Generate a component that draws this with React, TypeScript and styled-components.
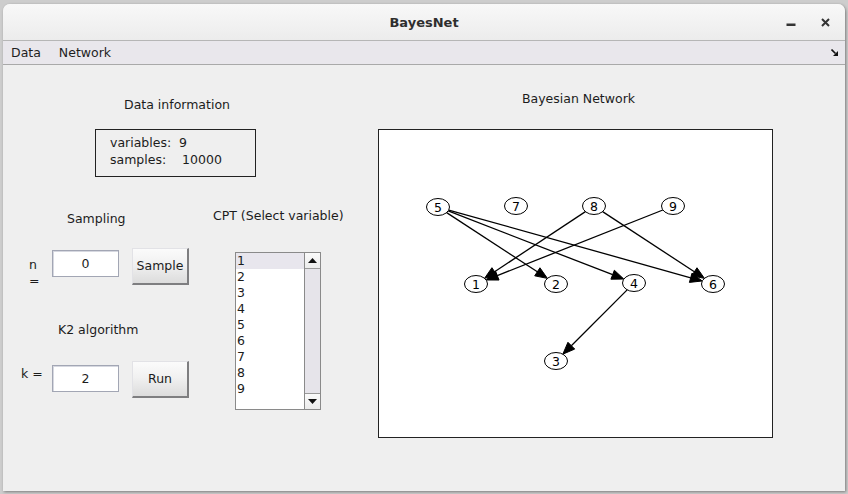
import React from "react";
import styled, { createGlobalStyle } from "styled-components";

const Global = createGlobalStyle`
  html, body { margin: 0; padding: 0; }
  body {
    background: #cdcdcd;
    font-family: "DejaVu Sans", "Liberation Sans", sans-serif;
    width: 848px;
    height: 494px;
    overflow: hidden;
  }
`;

const Window = styled.div`
  margin: 4px 0 0 3px;
  width: 842px;
  height: 487px;
  border-radius: 7px 7px 0 0;
  background: #efefef;
  box-shadow: 1px 1px 3px rgba(0, 0, 0, 0.4);
  overflow: hidden;
  display: flex;
  flex-direction: column;
`;

const TitleBar = styled.div`
  height: 36px;
  flex: none;
  background: linear-gradient(#f8f8f8, #ececec);
  border-bottom: 1px solid #b6b6b6;
  display: grid;
  grid-template-columns: 1fr auto 1fr;
  align-items: center;
`;

const Title = styled.div`
  grid-column: 2;
  font-size: 13px;
  font-weight: bold;
  color: #2e2e2e;
`;

const Controls = styled.div`
  grid-column: 3;
  justify-self: end;
  display: flex;
  align-items: center;
  gap: 25px;
  padding-right: 15px;
`;

const MenuBar = styled.div`
  height: 23px;
  flex: none;
  background: #e9e7ec;
  border-bottom: 1px solid #a9a9a9;
  display: flex;
  align-items: center;
  padding: 0 7px 0 8px;
  gap: 18px;
`;

const MenuItem = styled.span`
  font-size: 12.5px;
  color: #1e1e1e;
`;

const ResizeIcon = styled.svg`
  margin-left: auto;
`;

const Content = styled.div`
  flex: 1;
  display: flex;
  color: #1c1c1c;
  font-size: 12.5px;
`;

const LeftPanel = styled.div`
  width: 375px;
  flex: none;
  display: flex;
  flex-direction: column;
`;

const Heading = styled.div<{ $top?: number; $left?: number; $width?: number }>`
  margin-top: ${(p) => p.$top ?? 0}px;
  padding-left: ${(p) => p.$left ?? 0}px;
  ${(p) => (p.$width ? `width: ${p.$width}px; text-align: center;` : "")}
  line-height: 15px;
  white-space: nowrap;
`;

const InfoBox = styled.div`
  margin: 17px 0 0 92px;
  width: 161px;
  height: 48px;
  box-sizing: border-box;
  border: 1px solid #222;
  padding: 4px 0 0 14px;
  line-height: 17px;
  white-space: pre;
`;

const LowerRow = styled.div`
  display: flex;
  align-items: flex-start;
  margin: 31px 0 0 18px;
`;

const ControlsColumn = styled.div`
  width: 168px;
  display: flex;
  flex-direction: column;
`;

const FormRow = styled.div<{ $top: number }>`
  margin-top: ${(p) => p.$top}px;
  display: grid;
  grid-template-columns: 31px 80px 57px;
  align-items: start;
`;

const FieldLabel = styled.div<{ $top: number; $left: number }>`
  margin-top: ${(p) => p.$top}px;
  padding-left: ${(p) => p.$left}px;
  line-height: 16px;
  white-space: nowrap;
`;

const Field = styled.div<{ $top: number }>`
  margin-top: ${(p) => p.$top}px;
  width: 67px;
  height: 27px;
  box-sizing: border-box;
  background: #fff;
  border: 1px solid #a2a6b4;
  box-shadow: inset 1px 1px 0 #d6d8e0;
  display: flex;
  align-items: center;
  justify-content: center;
  padding-bottom: 1px;
`;

const Button = styled.div`
  width: 57px;
  height: 37px;
  box-sizing: border-box;
  border-style: solid;
  border-width: 1px 2px 2px 1px;
  border-color: #e2e2e6 #7e7e80 #7e7e80 #e2e2e6;
  background: linear-gradient(#fbfbfb, #f1f1f1 45%, #dcdcdc);
  display: flex;
  align-items: center;
  justify-content: center;
  padding-bottom: 1px;
`;

const CptColumn = styled.div`
  margin-left: 24px;
  display: flex;
  flex-direction: column;
  align-items: flex-start;
`;

const ListBox = styled.div`
  margin: 29px 0 0 22px;
  width: 86px;
  height: 158px;
  box-sizing: border-box;
  border: 1px solid #8a8a8a;
  display: flex;
  background: #fff;
`;

const Items = styled.div`
  flex: 1;
  display: flex;
  flex-direction: column;
`;

const Item = styled.div<{ $selected?: boolean }>`
  height: 16px;
  line-height: 16px;
  padding-left: 1px;
  background: ${(p) => (p.$selected ? "#e8e6ed" : "transparent")};
`;

const ScrollBar = styled.div`
  width: 15px;
  border-left: 1px solid #8a8a8a;
  background: #e6e4ea;
  display: flex;
  flex-direction: column;
  justify-content: space-between;
`;

const ArrowBtn = styled.div<{ $down?: boolean }>`
  height: 15px;
  background: linear-gradient(#fafafa, #ececec);
  ${(p) => (p.$down ? "border-top: 1px solid #9a9a9a;" : "border-bottom: 1px solid #9a9a9a;")}
  display: flex;
  align-items: center;
  justify-content: center;
`;

const RightPanel = styled.div`
  display: flex;
  flex-direction: column;
`;

const GraphBox = styled.div`
  margin-top: 23px;
  width: 395px;
  height: 309px;
  box-sizing: border-box;
  border: 1px solid #222;
  background: #fff;
`;

const nodes: Record<number, [number, number]> = {
  5: [59, 77],
  7: [137, 76],
  8: [215, 76],
  9: [294, 76],
  1: [97, 154],
  2: [177, 154],
  4: [255, 153],
  6: [334, 154],
  3: [177, 231],
};

const edges: [number, number][] = [
  [5, 2],
  [5, 4],
  [5, 6],
  [8, 1],
  [8, 6],
  [9, 1],
  [4, 3],
];

const RX = 11.5;
const RY = 8.5;

function boundary(dx: number, dy: number) {
  return 1 / Math.sqrt((dx / RX) ** 2 + (dy / RY) ** 2);
}

const Graph: React.FC = () => (
  <svg width={393} height={307} viewBox="0 0 393 307">
    {edges.map(([a, b]) => {
      const [x1, y1] = nodes[a];
      const [x2, y2] = nodes[b];
      const len = Math.hypot(x2 - x1, y2 - y1);
      const ux = (x2 - x1) / len;
      const uy = (y2 - y1) / len;
      const t = boundary(ux, uy);
      const sx = x1 + ux * t;
      const sy = y1 + uy * t;
      const ex = x2 - ux * t;
      const ey = y2 - uy * t;
      const L = 12;
      const W = 4.8;
      const bx = ex - ux * L;
      const by = ey - uy * L;
      const pts = `${ex},${ey} ${bx - uy * W},${by + ux * W} ${bx + uy * W},${by - ux * W}`;
      return (
        <g key={`${a}-${b}`}>
          <line x1={sx} y1={sy} x2={bx} y2={by} stroke="#000" strokeWidth={1.3} />
          <polygon points={pts} fill="#000" stroke="#000" strokeWidth={1} />
        </g>
      );
    })}
    {Object.entries(nodes).map(([id, [x, y]]) => (
      <g key={id}>
        <ellipse cx={x} cy={y} rx={RX} ry={RY} fill="#fff" stroke="#000" strokeWidth={1} />
        <text
          x={x}
          y={y + 4.5}
          textAnchor="middle"
          fontSize={12.5}
          fontFamily="DejaVu Sans, sans-serif"
          fill="#000"
        >
          {id}
        </text>
      </g>
    ))}
  </svg>
);

export default function App() {
  return (
    <>
      <Global />
      <Window>
        <TitleBar>
          <Title>BayesNet</Title>
          <Controls>
            <svg width={10} height={10} viewBox="0 0 10 10">
              <rect x={0.5} y={6.5} width={9} height={2.5} fill="#333" />
            </svg>
            <svg width={9} height={9} viewBox="0 0 9 9">
              <path d="M1 1 L8 8 M8 1 L1 8" stroke="#333" strokeWidth={2} />
            </svg>
          </Controls>
        </TitleBar>
        <MenuBar>
          <MenuItem>Data</MenuItem>
          <MenuItem>Network</MenuItem>
          <ResizeIcon width={7} height={7} viewBox="0 0 7 7">
            <path d="M0.5 0.5 L4.5 4.5" stroke="#111" strokeWidth={1.6} />
            <polygon points="7,7 2,7 7,2" fill="#111" />
          </ResizeIcon>
        </MenuBar>
        <Content>
          <LeftPanel>
            <Heading $top={32} $width={348}>
              Data information
            </Heading>
            <InfoBox>
              {"variables:  9\nsamples:    10000"}
            </InfoBox>
            <LowerRow>
              <ControlsColumn>
                <Heading $top={3} $left={46}>
                  Sampling
                </Heading>
                <FormRow $top={22}>
                  <FieldLabel $top={9} $left={8}>
                    n
                    <br />=
                  </FieldLabel>
                  <Field $top={2}>0</Field>
                  <Button>Sample</Button>
                </FormRow>
                <Heading $top={33} $left={37}>
                  K2 algorithm
                </Heading>
                <FormRow $top={24}>
                  <FieldLabel $top={5} $left={0}>
                    k =
                  </FieldLabel>
                  <Field $top={4}>2</Field>
                  <Button>Run</Button>
                </FormRow>
              </ControlsColumn>
              <CptColumn>
                <Heading>CPT (Select variable)</Heading>
                <ListBox>
                  <Items>
                    {[1, 2, 3, 4, 5, 6, 7, 8, 9].map((n) => (
                      <Item key={n} $selected={n === 1}>
                        {n}
                      </Item>
                    ))}
                  </Items>
                  <ScrollBar>
                    <ArrowBtn>
                      <svg width={9} height={5} viewBox="0 0 9 5">
                        <polygon points="4.5,0 9,5 0,5" fill="#111" />
                      </svg>
                    </ArrowBtn>
                    <ArrowBtn $down>
                      <svg width={9} height={5} viewBox="0 0 9 5">
                        <polygon points="0,0 9,0 4.5,5" fill="#111" />
                      </svg>
                    </ArrowBtn>
                  </ScrollBar>
                </ListBox>
              </CptColumn>
            </LowerRow>
          </LeftPanel>
          <RightPanel>
            <Heading $top={26} $left={3} $width={395}>
              Bayesian Network
            </Heading>
            <GraphBox>
              <Graph />
            </GraphBox>
          </RightPanel>
        </Content>
      </Window>
    </>
  );
}
